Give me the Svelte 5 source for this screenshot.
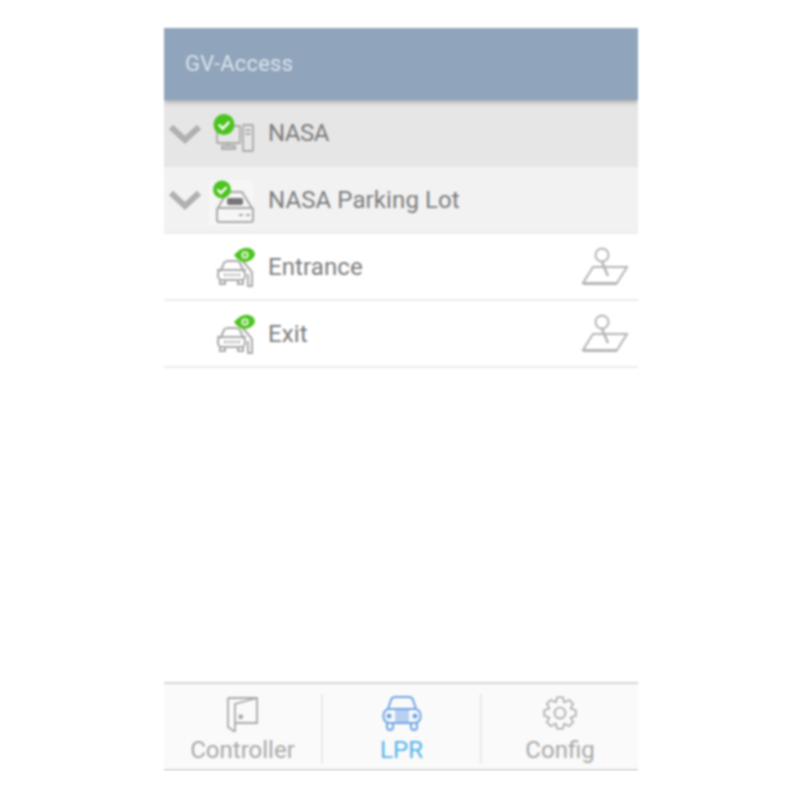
<script>
  const rows = [
    { label: 'Entrance' },
    { label: 'Exit' }
  ];
  const grey = '#a9a9a9';

  // 8 lobed outline for the config gear
  function gearPath(cx, cy, outer, inner, teeth) {
    const pts = [];
    const step = (Math.PI * 2) / teeth;
    for (let i = 0; i < teeth; i++) {
      const a = i * step - Math.PI / 2;
      const offs = [[-0.5, inner], [-0.22, outer], [0.22, outer], [0.5, inner]];
      for (const [o, r] of offs) {
        const t = a + o * step;
        pts.push((cx + Math.cos(t) * r).toFixed(1) + ' ' + (cy + Math.sin(t) * r).toFixed(1));
      }
    }
    return 'M' + pts.join(' L') + ' Z';
  }
</script>

{#snippet chevron()}
  <svg class="chevron" width="34" height="22" viewBox="0 0 34 22" fill="none">
    <path d="M3 4 L17 17 L31 4" stroke="#b0b0b0" stroke-width="6"/>
  </svg>
{/snippet}

{#snippet check(cx, cy, r)}
  <circle {cx} {cy} {r} fill="#4cc31f"/>
  <path d="M{cx - r * 0.5} {cy} l{r * 0.38} {r * 0.4} l{r * 0.62} -{r * 0.65}" fill="none" stroke="#fff" stroke-width="2.4"/>
{/snippet}

{#snippet lprIcon()}
  <svg class="icon" width="44" height="44" viewBox="0 0 44 44" fill="none">
    <g stroke={grey} stroke-width="2">
      <path d="M6 25 L9 18 Q10 16 13 16 H21 Q24 16 25 18 L28 25"/>
      <path d="M2 25 H6 M28 25 H31"/>
      <rect x="3" y="25" width="27" height="10" rx="4"/>
      <path d="M5 35 v4 h5 v-4 M23 35 v4 h5 v-4"/>
      <path d="M9 30 h16" stroke-dasharray="2 1.500" stroke-width="2.500"/>
      <path d="M27 15 L37 27 V41 H33 V29"/>
    </g>
    <path d="M19 10 Q27 1 34 3 Q40 5 40 10 Q37 17 29 17 Q23 16 19 10Z" fill="#4cc31f"/>
    <circle cx="30" cy="10" r="3.800" fill="#dff4d3"/>
    <circle cx="30" cy="10" r="1.700" fill="#4cc31f"/>
  </svg>
{/snippet}

{#snippet mapIcon()}
  <svg class="map" width="48" height="42" viewBox="0 0 48 42" fill="none">
    <circle cx="21" cy="9" r="6.500" stroke="#b5b5b5" stroke-width="2"/>
    <path d="M21 16 L27 30" stroke="#b5b5b5" stroke-width="2.500"/>
    <path d="M12 21 H46 L36 37 H2 Z" stroke="#b5b5b5" stroke-width="2"/>
    <path d="M2 37.500 H36" stroke="#b5b5b5" stroke-width="3"/>
  </svg>
{/snippet}

<div class="phone">
  <header class="title">GV-Access</header>

  <div class="row site">
    {@render chevron()}
    <svg class="icon" width="44" height="44" viewBox="0 0 44 44" fill="none">
      <g stroke={grey} stroke-width="1.800">
        <rect x="8" y="14" width="23" height="17" rx="1"/>
        <path d="M19 31 V34 M13 37 H26 V34 H13 Z"/>
        <rect x="34" y="13" width="10" height="26" rx="1"/>
        <path d="M36.500 18 h5 M36.500 22 h5"/>
      </g>
      {@render check(15, 12.500, 10.500)}
    </svg>
    <span class="label">NASA</span>
  </div>

  <div class="row lot">
    {@render chevron()}
    <svg class="icon" width="44" height="44" viewBox="0 0 44 44" fill="none">
      <rect x="0" y="2" width="44" height="46" fill="#f6f6f6"/>
      <g stroke={grey} stroke-width="2">
        <path d="M18 14 H33 L43 30 H9 Z"/>
        <rect x="8" y="30" width="36" height="14" rx="2"/>
        <path d="M30 37 h4 M37 37 h4"/>
      </g>
      <rect x="18" y="20" width="16" height="7" rx="2" fill="#777"/>
      {@render check(13, 11.500, 9)}
    </svg>
    <span class="label">NASA Parking Lot</span>
  </div>

  {#each rows as row}
    <div class="row cam">
      {@render lprIcon()}
      <span class="label">{row.label}</span>
      {@render mapIcon()}
    </div>
  {/each}

  <div class="empty"></div>

  <nav class="tabs">
    <div class="tab">
      <svg width="36" height="38" viewBox="0 0 36 38" fill="none" stroke="#a8a8a8" stroke-width="1.800">
        <path d="M3 4 H32 V29 H10"/>
        <path d="M3 4 V33 L10 38 V10 L32 4"/>
        <rect x="14.500" y="21.500" width="2.500" height="2.500" fill="#a8a8a8"/>
      </svg>
      <span>Controller</span>
    </div>
    <div class="tab active">
      <svg width="42" height="38" viewBox="0 0 42 38" fill="none" stroke="#6fa4e6" stroke-width="2">
        <path d="M7 15 L10 6 Q11 3 14 3 H28 Q31 3 32 6 L35 15"/>
        <rect x="2.500" y="15" width="37" height="14" rx="6"/>
        <path d="M6 29 V33 Q6 36 9 36 Q12 36 12 33 V29 M30 29 V33 Q30 36 33 36 Q36 36 36 33 V29"/>
        <circle cx="8" cy="22" r="1.500" fill="#6fa4e6"/>
        <circle cx="34" cy="22" r="1.500" fill="#6fa4e6"/>
        <rect x="14" y="16" width="14" height="12" fill="#b7d0ef" stroke="none"/>
      </svg>
      <span>LPR</span>
    </div>
    <div class="tab">
      <svg width="36" height="38" viewBox="0 0 36 38" fill="none" stroke="#a8a8a8" stroke-width="1.600">
        <circle cx="18" cy="19" r="5.500"/>
        <path d={gearPath(18, 19, 16, 11.500, 8)} stroke-linejoin="round"/>
      </svg>
      <span>Config</span>
    </div>
  </nav>
</div>

<style>
  :global(body) {
    background: #fff;
    font-family: Roboto, "Noto Sans", sans-serif;
  }

  .phone {
    box-sizing: border-box;
    width: 474px;
    height: 743px;
    margin: 28px 0 0 164px;
    display: flex;
    flex-direction: column;
    filter: blur(0.8px);
    overflow: hidden;
  }

  .title {
    flex: 0 0 72px;
    display: flex;
    align-items: center;
    padding: 0 0 2px 21px;
    box-sizing: border-box;
    background: #90a4bb;
    color: #dbe3ec;
    font-size: 22px;
    letter-spacing: 0.2px;
    box-shadow: 0 2px 5px rgba(0, 0, 0, 0.3);
    position: relative;
  }

  .row {
    box-sizing: border-box;
    flex: 0 0 67px;
    display: flex;
    align-items: center;
    color: #7c7c7c;
    font-size: 24px;
    letter-spacing: 0.1px;
  }

  .site { background: #e6e6e6; letter-spacing: -0.5px; }
  .site .label { padding-bottom: 1px; }
  .lot { background: #f2f2f2; border-bottom: 2px solid #ececec; }
  .cam { background: #fff; border-bottom: 2px solid #ececec; padding-left: 51px; }

  .chevron { margin-left: 4px; margin-right: 7px; }
  .icon { margin-right: 15px; overflow: visible; }
  .cam .icon { margin-right: 9px; }
  .label { flex: 1; }
  .map { margin-right: 9px; }

  .empty { flex: 1; background: #fff; }

  .tabs {
    flex: 0 0 89px;
    box-sizing: border-box;
    display: grid;
    grid-template-columns: 157px 159px 158px;
    background: #fafafa;
    border-top: 2px solid #d6d6d6;
    border-bottom: 2px solid #d6d6d6;
    padding: 10px 0 6px;
  }

  .tab {
    display: flex;
    flex-direction: column;
    align-items: center;
    color: #a8a8a8;
    font-size: 24px;
    line-height: 26px;
    border-left: 2px solid #e9e9e9;
  }

  .tab svg { margin-bottom: 5px; }
  .tab:first-child { border-left: none; }
  .tab.active { color: #56b5ea; }
</style>
